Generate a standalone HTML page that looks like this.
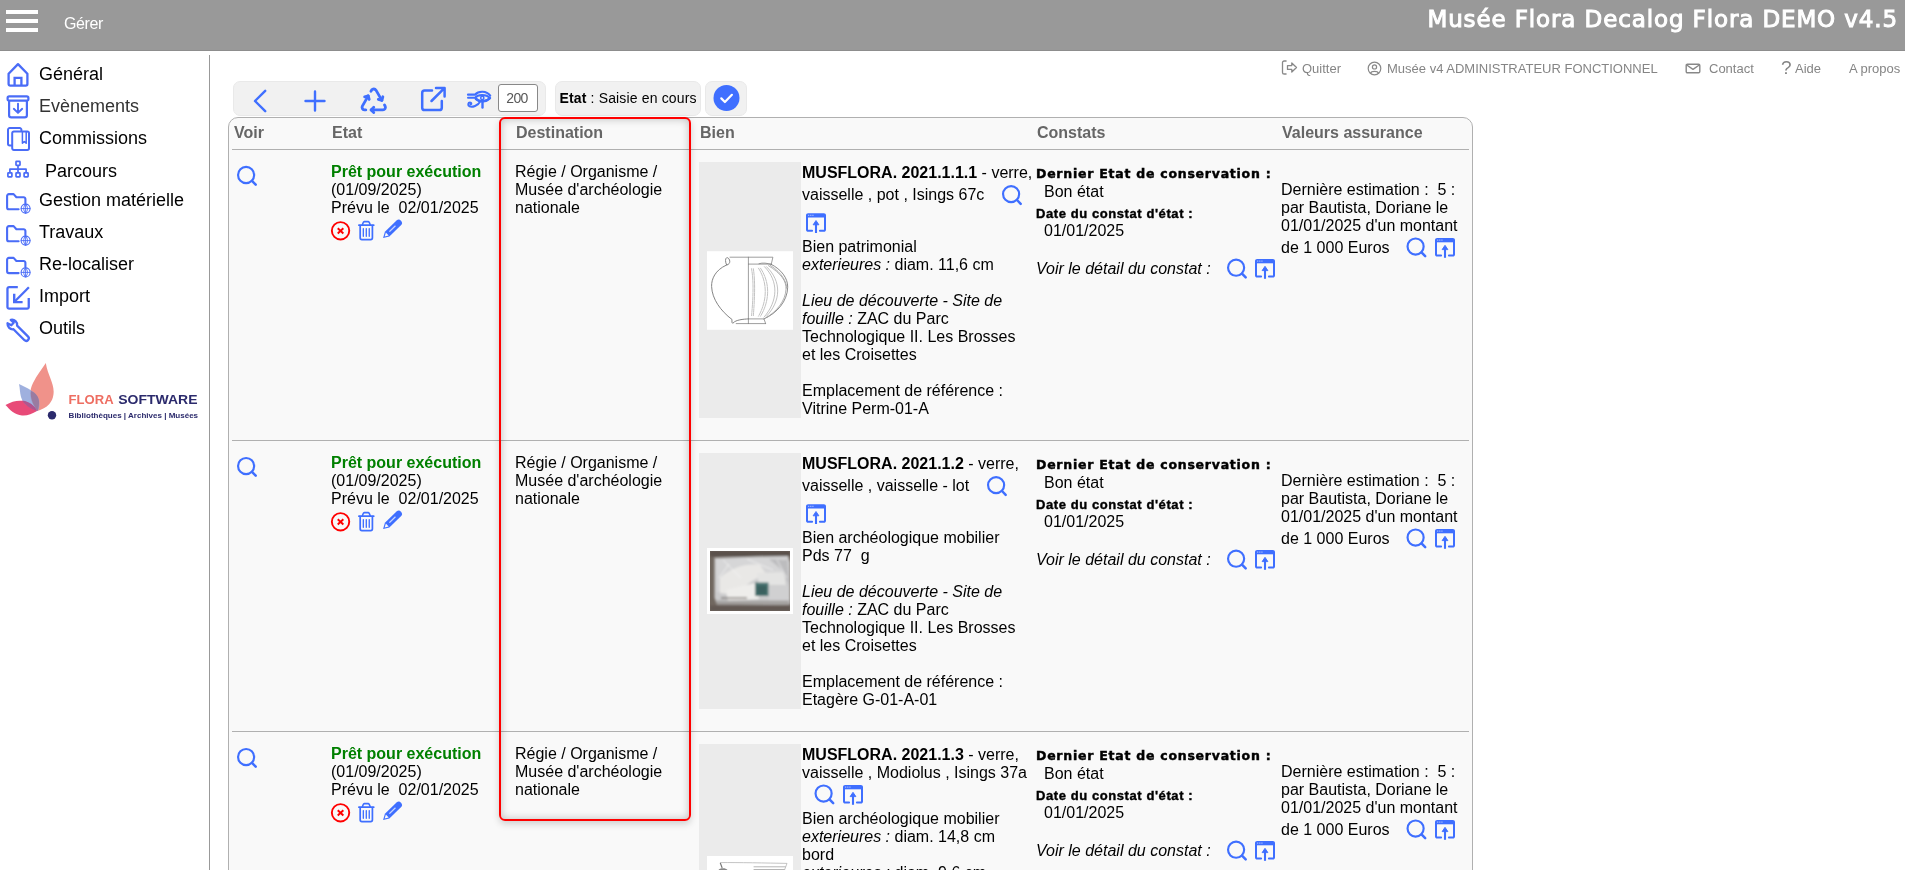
<!DOCTYPE html>
<html lang="fr">
<head>
<meta charset="utf-8">
<title>Musée Flora</title>
<style>
html,body{margin:0;padding:0;}
body{will-change:transform;width:1905px;height:870px;overflow:hidden;background:#fff;font-family:"Liberation Sans",Arial,sans-serif;font-size:16px;color:#000;position:relative;}
.abs{position:absolute;}
#hdr{position:absolute;left:0;top:0;width:1905px;height:50px;background:#999;border-bottom:1px solid #8d8d8d;}
#burger div{position:absolute;left:6px;width:32px;height:4px;background:#fff;}
#gerer{position:absolute;left:64px;top:15px;font-size:16px;color:#fff;letter-spacing:-0.4px;}
#title{position:absolute;right:7px;top:6px;font-family:"DejaVu Sans","Liberation Sans",sans-serif;font-size:23px;letter-spacing:0.880px;-webkit-text-stroke:1px #fff;color:#fff;white-space:nowrap;}
#vline{position:absolute;left:209px;top:55px;width:1px;height:815px;background:#999;}
.nav{position:absolute;left:39px;font-size:18px;white-space:nowrap;line-height:20px;}
.navi{position:absolute;left:5px;width:26px;height:26px;}
.top{position:absolute;top:61px;font-size:13px;color:#858585;white-space:nowrap;line-height:15px;}
.tb{position:absolute;top:81px;height:35px;box-sizing:border-box;background:#f1f1f1;border-radius:7px;border:1px solid #e9e9e9;}
#panel{position:absolute;left:228px;top:117px;width:1243px;height:800px;background:#f9f9f9;border:1px solid #b0b0b0;border-radius:10px;}
.th{position:absolute;top:124px;font-size:16px;font-weight:bold;color:#666;line-height:18px;white-space:nowrap;}
.hl{position:absolute;left:232px;width:1237px;height:1px;background:#b0b0b0;}
.t{position:absolute;margin-top:1px;line-height:18px;white-space:nowrap;font-size:16px;}
.g{color:#008000;font-weight:bold;}
.ic{position:absolute;overflow:visible;}
.row{position:absolute;left:0;width:1905px;height:291px;}
.kb{font-family:"DejaVu Sans","Liberation Sans",sans-serif;font-size:12.5px;font-weight:bold;letter-spacing:0.75px;-webkit-text-stroke:0.450px #000;}
.db{font-size:13px;font-weight:bold;letter-spacing:0.58px;-webkit-text-stroke:0.4px #000;}
#red{position:absolute;left:498.600px;top:117.200px;width:188px;height:700px;border:2px solid #f00;border-radius:6px;box-shadow:0 3px 7px rgba(0,0,0,.17), inset 0 0 9px rgba(0,0,0,.24);}
</style>
</head>
<body>
<div id="hdr">
  <div id="burger"><div style="top:10px"></div><div style="top:19px"></div><div style="top:28px"></div></div>
  <div id="gerer">Gérer</div>
  <div id="title">Musée Flora Decalog Flora DEMO v4.5</div>
</div>
<div id="vline"></div>

<!-- NAV -->
<div class="nav" style="top:64px">Général</div>
<div class="nav" style="top:96px;color:#333">Evènements</div>
<div class="nav" style="top:128px">Commissions</div>
<div class="nav" style="top:161px;left:45px">Parcours</div>
<div class="nav" style="top:190px">Gestion matérielle</div>
<div class="nav" style="top:222px">Travaux</div>
<div class="nav" style="top:254px">Re-localiser</div>
<div class="nav" style="top:286px">Import</div>
<div class="nav" style="top:318px">Outils</div>


<!-- NAV ICONS -->
<svg class="ic" style="left:7px;top:62px" width="22" height="25" viewBox="0.000 -0.500 22 25" fill="none" stroke="#4a6cf7" stroke-width="2.3" stroke-linejoin="round" stroke-linecap="round"><path d="M1.6 11.2L11 1.6L20.4 11.2V21.6a1.6 1.6 0 0 1-1.6 1.6H3.2a1.6 1.6 0 0 1-1.6-1.6Z"/><path d="M7.6 23V15.4H14.4V23" stroke-linejoin="miter" stroke-linecap="butt"/></svg>
<svg class="ic" style="left:6px;top:95px" width="23" height="24" viewBox="-0.500 0.000 23 24" fill="none" stroke="#4a6cf7" stroke-width="2.2" stroke-linejoin="round" stroke-linecap="round"><rect x="1.1" y="1.3" width="20.8" height="4.4" rx="1.6"/><path d="M2.6 6V20.2a2.2 2.2 0 0 0 2.2 2.2H18.2a2.2 2.2 0 0 0 2.2-2.2V6"/><path d="M11.5 8.6V17.6M7.3 13.8L11.5 17.9L15.7 13.8" stroke-width="1.9"/></svg>
<svg class="ic" style="left:7px;top:127px" width="23" height="24" viewBox="0.000 0.000 23 24" fill="none" stroke="#4a6cf7" stroke-width="2" stroke-linejoin="round" stroke-linecap="round"><path d="M14.4 3.4V2.8A1.7 1.7 0 0 0 12.7 1.1H2.7A1.7 1.7 0 0 0 1 2.8V16.8a1.7 1.7 0 0 0 1.7 1.7H4.6"/><path d="M5.2 6.2a1.7 1.7 0 0 1 1.7-1.7H20.3A1.7 1.7 0 0 1 22 6.2V21.3a1.7 1.7 0 0 1-1.7 1.7H6.9a1.7 1.7 0 0 1-1.7-1.7Z"/><path d="M15.4 5V16.2L17.3 14.6L19.2 16.2V5" stroke-width="1.5"/></svg>
<svg class="ic" style="left:7px;top:160px" width="22" height="18" viewBox="0.000 -0.500 22 18" fill="none" stroke="#4a6cf7" stroke-width="1.7" stroke-linejoin="round"><rect x="9" y="0.9" width="4" height="4" rx="0.6"/><rect x="0.9" y="12.4" width="4" height="4" rx="0.6"/><rect x="9" y="12.4" width="4" height="4" rx="0.6"/><rect x="17.1" y="12.4" width="4" height="4" rx="0.6"/><path d="M11 5V12.4M2.9 12.4V8.7H19.1V12.4"/></svg>
<svg class="ic" style="left:6px;top:193px" width="25" height="21" viewBox="0.000 0.000 25 21" fill="none" stroke="#4a6cf7" stroke-linejoin="round" stroke-linecap="round"><path d="M12.6 16.3H2.9A1.8 1.8 0 0 1 1.1 14.5V2.9A1.8 1.8 0 0 1 2.9 1.1H7.6L10.4 4.2H17.6A1.8 1.8 0 0 1 19.4 6V10.2" stroke-width="2.1"/><circle cx="19.6" cy="15.6" r="4.5" stroke-width="1.1"/><path d="M15.2 15.6H24M19.6 11.1V20.1M19.6 11.1C17 13.5 17 17.7 19.6 20.1M19.6 11.1C22.2 13.5 22.2 17.7 19.6 20.1" stroke-width="0.9"/></svg>
<svg class="ic" style="left:6px;top:225px" width="25" height="21" viewBox="0.000 0.000 25 21" fill="none" stroke="#4a6cf7" stroke-linejoin="round" stroke-linecap="round"><path d="M12.6 16.3H2.9A1.8 1.8 0 0 1 1.1 14.5V2.9A1.8 1.8 0 0 1 2.9 1.1H7.6L10.4 4.2H17.6A1.8 1.8 0 0 1 19.4 6V10.2" stroke-width="2.1"/><circle cx="19.6" cy="15.6" r="4.5" stroke-width="1.1"/><path d="M15.2 15.6H24M19.6 11.1V20.1M19.6 11.1C17 13.5 17 17.7 19.6 20.1M19.6 11.1C22.2 13.5 22.2 17.7 19.6 20.1" stroke-width="0.9"/></svg>
<svg class="ic" style="left:6px;top:256px" width="25" height="21" viewBox="0.000 -0.800 25 21" fill="none" stroke="#4a6cf7" stroke-linejoin="round" stroke-linecap="round"><path d="M12.6 16.3H2.9A1.8 1.8 0 0 1 1.1 14.5V2.9A1.8 1.8 0 0 1 2.9 1.1H7.6L10.4 4.2H17.6A1.8 1.8 0 0 1 19.4 6V10.2" stroke-width="2.1"/><circle cx="19.6" cy="15.6" r="4.5" stroke-width="1.1"/><path d="M15.2 15.6H24M19.6 11.1V20.1M19.6 11.1C17 13.5 17 17.7 19.6 20.1M19.6 11.1C22.2 13.5 22.2 17.7 19.6 20.1" stroke-width="0.9"/></svg>
<svg class="ic" style="left:6px;top:286px" width="24" height="24" viewBox="-0.300 0.000 24 24" fill="none" stroke="#4a6cf7" stroke-width="2.300"><path d="M11.500 1.150H2.800A1.650 1.650 0 0 0 1.150 2.800V21A1.650 1.650 0 0 0 2.800 22.650H20.800A1.650 1.650 0 0 0 22.450 21V12"/><path d="M22.600 1.300L8.400 15.500"/><path d="M7.900 7.700V16.100H16.300" stroke-width="2.400"/></svg>
<svg class="ic" style="left:6px;top:318px" width="24" height="24" viewBox="-0.300 -0.800 24 24" fill="none" stroke="#4a6cf7" stroke-width="2.300" stroke-linejoin="round" stroke-linecap="round"><path d="M4.500 1.100L7.400 3.900L5 6.400L1.200 4.400C1 8.200 4 11 7.200 10.400L18.200 21.400A2.550 2.550 0 0 0 21.800 17.800L10.800 6.800C11.300 3.400 8.200 0.200 4.500 1.100Z"/></svg>
<!-- LOGO -->
<svg class="ic" style="left:0;top:355px" width="210" height="75" viewBox="0 0 210 75">
<path d="M45.8 8C48 22 56 30 53 42C51 50 44 54 37.5 56C30 48 28 38 33 28C37 20 42 14 45.8 8Z" fill="#f0928a"/>
<path d="M5.5 50C12 46 18 45 24 46C30 47 35 51 37 56C32 59 27 61 22 60.5C15 60 10 55 5.5 50Z" fill="#e84a78"/>
<path d="M19 29C27 33 36 36 39 45C40 50 39 54 37.5 56C30 53 23 49 21 42C19.800 38 20 33 19 29Z" fill="#8ea2d8" fill-opacity="0.85"/>
<path d="M31 36C36 38 39 42 39 47C39 51 38.500 54 37.5 56C33 50 30 43 31 36Z" fill="#9a7ba0"/>
<path d="M22 45.500C28 46 34 50 37.5 56C32 54.500 26 51 22 45.500Z" fill="#b0558e"/>
<circle cx="52" cy="60.300" r="4.200" fill="#2b2a6c"/>
<text x="68.600" y="49.400" font-family="Liberation Sans, Arial, sans-serif" font-weight="bold" font-size="13.400" fill="#ee6e62" textLength="45" lengthAdjust="spacingAndGlyphs">FLORA</text>
<text x="118.300" y="49.400" font-family="Liberation Sans, Arial, sans-serif" font-weight="bold" font-size="13.400" fill="#2b2a6c" textLength="79.200" lengthAdjust="spacingAndGlyphs">SOFTWARE</text>
<text x="68.600" y="62.800" font-family="Liberation Sans, Arial, sans-serif" font-weight="bold" font-size="7.400" fill="#2b2a6c" textLength="129.500" lengthAdjust="spacingAndGlyphs">Bibliothèques | Archives | Musées</text>
</svg>

<!-- TOP ICONS -->
<svg class="ic" style="left:1281px;top:60px" width="16" height="15" viewBox="-0.500 0.000 16 15" fill="none" stroke="#888" stroke-width="1.3" stroke-linejoin="round" stroke-linecap="round"><path d="M4.6 1H2.6A1.6 1.6 0 0 0 1 2.600V12.400A1.600 1.600 0 0 0 2.600 14H4.600"/><path d="M6 5.600H10.300V3L15 7.500L10.300 12V9.400H6Z"/></svg>
<svg class="ic" style="left:1367px;top:61px" width="14" height="14" viewBox="-0.500 -0.500 14 14" fill="none" stroke="#888" stroke-width="1.200"><circle cx="7" cy="7" r="6.300"/><circle cx="7" cy="5.400" r="2.100"/><path d="M3 11.700C4 9.300 10 9.300 11 11.700"/></svg>
<svg class="ic" style="left:1685px;top:63px" width="15" height="10" viewBox="-0.500 -0.500 15 10" fill="none" stroke="#888" stroke-width="1.400" stroke-linejoin="round"><rect x="0.700" y="0.700" width="13.600" height="8.600" rx="1.200"/><path d="M1.200 1.500L7.500 5.800L13.800 1.500"/></svg>
<div class="top" style="left:1781px;top:58px;font-size:19px;line-height:20px">?</div>
<!-- TOP LINKS -->
<div class="top" style="left:1302px">Quitter</div>
<div class="top" style="left:1387px">Musée v4 ADMINISTRATEUR FONCTIONNEL</div>
<div class="top" style="left:1709px">Contact</div>
<div class="top" style="left:1795px">Aide</div>
<div class="top" style="left:1849px">A propos</div>

<!-- TOOLBAR -->
<div class="tb" style="left:233px;width:313px"></div>
<div class="tb" style="left:555px;width:146px"></div>
<div class="tb" style="left:705px;width:42px"></div>


<!-- TOOLBAR ICONS -->
<svg class="ic" style="left:253px;top:89px" width="14" height="24" viewBox="0.000 0.000 14 24" fill="none" stroke="#3f6fff" stroke-width="2.400" stroke-linecap="round" stroke-linejoin="round"><path d="M12.200 1.800L2 12L12.200 22.200"/></svg>
<svg class="ic" style="left:304px;top:90px" width="22" height="22" viewBox="0.000 0.000 22 22" fill="none" stroke="#3f6fff" stroke-width="2.400" stroke-linecap="round"><path d="M11 1.500V20.500M1.500 11H20.500"/></svg>
<svg class="ic" style="left:358px;top:85px" width="31.500" height="31.500" viewBox="0.000 0.000 24 24" fill="none" stroke="#3f6fff" stroke-width="2.150" stroke-linecap="round" stroke-linejoin="round"><path d="M12 17l-2 2l2 2"/><path d="M10 19h9a2 2 0 0 0 1.750 -2.750l-.550 -1"/><path d="M8.536 11l-.732 -2.732l-2.732 .732"/><path d="M7.804 8.268l-4.500 7.794a2 2 0 0 0 1.506 2.890l1.141 .024"/><path d="M15.464 11l2.732 .732l.732 -2.732"/><path d="M18.196 11.732l-4.500 -7.794a2 2 0 0 0 -3.256 -.140l-.591 .976"/></svg>
<svg class="ic" style="left:421px;top:86px" width="25" height="25" viewBox="0.000 -0.500 25 25" fill="none" stroke="#3f6fff" stroke-width="2.500" stroke-linecap="round" stroke-linejoin="round"><path d="M11 4H3.600A2.400 2.400 0 0 0 1.200 6.400V21.200A2.400 2.400 0 0 0 3.600 23.600H18.400A2.400 2.400 0 0 0 20.800 21.200V14.500"/><path d="M10.500 14.500L23.400 1.600M15 1.400H23.600V10"/></svg>
<svg class="ic" style="left:467px;top:90px" width="24" height="18" viewBox="0.000 -0.500 24 18" fill="none" stroke="#3f6fff" stroke-width="2" stroke-linecap="round" stroke-linejoin="round"><path d="M1 4.200H8C11.500 0.200 19.500 0 23.200 5.200" stroke-width="2.200"/><path d="M1 7.300H8C11 3.400 19 3.400 23.200 7.500C19 11.800 12 11.800 8.500 7.800"/><path d="M9 8.500C13 12 19 11.500 22.500 8" stroke-width="2.400"/><circle cx="15.300" cy="7.400" r="1.600" stroke-width="1.500"/><path d="M15.500 10.800V17" stroke-width="2.400"/><path d="M13.500 10.600C11 15.500 5 17 2.600 15.900C0.500 14.800 1 12 3 12C4.500 12 4.800 13.600 3.600 14"/></svg>
<div class="abs" style="left:498px;top:84px;width:36px;padding-right:2px;height:26px;border:1px solid #888;border-radius:3px;background:#fff;font-size:14px;color:#585858;line-height:26px;text-align:center;letter-spacing:-0.700px">200</div>
<div class="abs" style="left:559.500px;top:90px;font-size:14px;line-height:16px;white-space:nowrap;letter-spacing:0.150px"><b>Etat</b> : Saisie en cours</div>
<svg class="ic" style="left:713px;top:85px" width="26" height="26" viewBox="-0.500 0.000 26 26"><circle cx="13" cy="13" r="13" fill="#3f6fff"/><path d="M7.800 13.400L11.400 17L18.400 9.800" fill="none" stroke="#fff" stroke-width="2.200" stroke-linecap="round" stroke-linejoin="round"/></svg>
<div id="panel"></div>
<div class="th" style="left:234px">Voir</div>
<div class="th" style="left:332px">Etat</div>
<div class="th" style="left:516px">Destination</div>
<div class="th" style="left:700px">Bien</div>
<div class="th" style="left:1037px">Constats</div>
<div class="th" style="left:1282px">Valeurs assurance</div>
<div class="hl" style="top:149px"></div>
<div class="hl" style="top:440px"></div>
<div class="hl" style="top:731px"></div>

<!--ROWS-->
<div class="row" style="top:150px">
<svg class="ic" style="left:236px;top:16px" width="22" height="22" viewBox="-0.800 0.000 22 22" fill="none" stroke="#3f6fff"><circle cx="9.3" cy="9" r="8.050" stroke-width="2.150"/><path d="M15.200 14.900L18.900 18.700" stroke-width="2.500" stroke-linecap="round"/></svg>
<div class="t g" style="left:331px;top:12px">Prêt pour exécution</div>
<div class="t" style="left:331px;top:30px">(01/09/2025)</div>
<div class="t" style="left:331px;top:48px">Prévu le&nbsp; 02/01/2025</div>
<svg class="ic" style="left:330px;top:70px" width="20" height="20" viewBox="-0.550 -0.800 20 20" fill="none" stroke="#f00"><circle cx="10" cy="10" r="8.700" stroke-width="1.900"/><path d="M7.200 7.400L12.800 12.700M12.800 7.400L7.200 12.700" stroke-width="1.900"/></svg>
<svg class="ic" style="left:357px;top:70px" width="17.200" height="20" viewBox="-0.733 -0.600 18 20" preserveAspectRatio="none" fill="none" stroke="#3f6fff" stroke-linecap="round"><path d="M1.200 4.600H16.800" stroke-width="1.700"/><path d="M4.900 4.200C5.600 1.600 6.200 1 7 1h4c.8 0 1.400.6 2.100 3.200" stroke-width="1.600"/><path d="M2.600 5V17.200a1.800 1.800 0 0 0 1.800 1.800h9.200a1.800 1.800 0 0 0 1.800-1.800V5" stroke-width="1.800"/><path d="M5.900 8V15.600M9 8V15.600M12.100 8V15.600" stroke-width="1.400"/></svg>
<svg class="ic" style="left:382px;top:68px" width="22" height="22" viewBox="0.000 0.000 22 22"><g transform="translate(1.100,20) rotate(-44)"><path d="M0 0L5.600-3.200H21.700Q24.900-3.200 24.900 0Q24.900 3.200 21.700 3.200H5.600Z" fill="#3f6fff"/><path d="M2.200 0L5.800-2V2Z" fill="#f9f9f9"/><path d="M9.500-.2H17" stroke="#c9d5ff" stroke-width="1.200" stroke-linecap="round"/></g></svg>
<div class="t" style="left:515px;top:12px">Régie / Organisme /<br>Musée d'archéologie<br>nationale</div>
<div class="abs" style="left:699px;top:12px;width:102px;height:256px;background:#ebebeb"></div>
<svg class="ic" style="left:707px;top:101px" width="86" height="78.600" viewBox="0.000 -0.200 86 78.6"><rect width="86" height="78.600" fill="#fff"/>
<g fill="none" stroke="#7d7d7d" stroke-width="0.750" stroke-linecap="round">
<path d="M23 6H65.900L64.300 12.900"/><path d="M41.400 6V72.400"/><path d="M41.400 12.900H64.300M41.400 67.700H57L58.600 72.300M29.200 72.400H58.600"/>
<path d="M19.600 13.800C17.800 10 18.300 6 20.500 6.500C22.800 7.200 24.500 12.800 19.600 13.800C8 19 4.400 28 4.600 35.200C5 48 14 60 25 68.300C24.800 71 25 72.400 26 71.900C29 68.500 36 68 41.400 67.700" stroke-width="0.950"/>
<path d="M64.300 13.200C74 18 81 27 80.700 36C80.400 50 70 62 57 67.700" stroke-width="0.900"/>
<path d="M52 12.500C56 11.200 60 12 64.300 13.200" />
<path d="M61.500 14.500C74 22 79.500 30 79 38C78.500 50 69 61 59 66.500M63 14C76 22 80 32 79.700 37" stroke="#999"/>
<path d="M57.500 15.500C72 30 71 50 57 66M59.500 15.500C75 30 74 50 59.500 65" stroke="#999" stroke-width="0.600"/>
<path d="M51.500 17C61 32 60 50 51.500 65M53.500 17C63.500 32 62.500 50 53.500 65" stroke="#999" stroke-width="0.600" stroke-dasharray="4 1"/>
<path d="M44.500 17.500C47 30 46 50 44.500 65M46.300 17.500C48.500 30 47.500 50 46.300 65" stroke="#999" stroke-width="0.600" stroke-dasharray="3 1"/>
</g></svg>
<div class="t" style="left:802px;top:13px"><b>MUSFLORA. 2021.1.1.1</b> - verre,</div><div class="t" style="left:802px;top:35px">vaisselle , pot , Isings 67c</div><svg class="ic" style="left:1001px;top:35px" width="22" height="22" viewBox="-0.800 -0.100 22 22" fill="none" stroke="#3f6fff"><circle cx="9.3" cy="9" r="8.050" stroke-width="2.150"/><path d="M15.200 14.900L18.900 18.700" stroke-width="2.500" stroke-linecap="round"/></svg><svg class="ic" style="left:806px;top:63px" width="20" height="21" viewBox="0.000 -0.200 20 21" fill="none" stroke="#3f6fff"><path d="M6.100 17.600H2.100a1.100 1.100 0 0 1-1.100-1.100V2.100A1.100 1.100 0 0 1 2.100 1h15.800A1.100 1.100 0 0 1 19 2.100v14.400a1.100 1.100 0 0 1-1.100 1.100h-4" stroke-width="2" stroke-linecap="round"/><rect x="1" y="1" width="18" height="3.300" fill="#3f6fff" stroke="none"/><path d="M2.300 2.100h0.900M4.400 2.100h0.900M6.500 2.100h0.900" stroke="#c5d2ff" stroke-width="1.200"/><path d="M10 19.800V10" stroke-width="2.100"/><path d="M10 7.300L12.900 11.600H7.100Z" fill="#3f6fff" stroke-width="0.900" stroke-linejoin="round"/></svg><div class="t" style="left:802px;top:87px">Bien patrimonial<br><i>exterieures :</i> diam. 11,6 cm<br><br><i>Lieu de découverte - Site de</i><br><i>fouille :</i> ZAC du Parc<br>Technologique II. Les Brosses<br>et les Croisettes<br><br>Emplacement de référence :<br>Vitrine Perm-01-A</div>
<div class="t kb" style="left:1036px;top:14px">Dernier Etat de conservation :</div>
<div class="t" style="left:1044px;top:32px">Bon état</div>
<div class="t db" style="left:1036px;top:54px">Date du constat d'état :</div>
<div class="t" style="left:1044px;top:71px">01/01/2025</div>
<div class="t" style="left:1036px;top:109px;font-style:italic">Voir le détail du constat :</div>
<svg class="ic" style="left:1226px;top:108px" width="22" height="22" viewBox="-0.800 -0.700 22 22" fill="none" stroke="#3f6fff"><circle cx="9.3" cy="9" r="8.050" stroke-width="2.150"/><path d="M15.200 14.900L18.900 18.700" stroke-width="2.500" stroke-linecap="round"/></svg>
<svg class="ic" style="left:1255px;top:109px" width="20" height="21" viewBox="0.000 0.000 20 21" fill="none" stroke="#3f6fff"><path d="M6.100 17.600H2.100a1.100 1.100 0 0 1-1.100-1.100V2.100A1.100 1.100 0 0 1 2.100 1h15.800A1.100 1.100 0 0 1 19 2.100v14.400a1.100 1.100 0 0 1-1.100 1.100h-4" stroke-width="2" stroke-linecap="round"/><rect x="1" y="1" width="18" height="3.300" fill="#3f6fff" stroke="none"/><path d="M2.300 2.100h0.900M4.400 2.100h0.900M6.500 2.100h0.900" stroke="#c5d2ff" stroke-width="1.200"/><path d="M10 19.800V10" stroke-width="2.100"/><path d="M10 7.300L12.900 11.600H7.100Z" fill="#3f6fff" stroke-width="0.900" stroke-linejoin="round"/></svg>
<div class="t" style="left:1281px;top:30px">Dernière estimation :&nbsp; 5 :<br>par Bautista, Doriane le<br>01/01/2025 d'un montant</div>
<div class="t" style="left:1281px;top:88px">de 1 000 Euros</div>
<svg class="ic" style="left:1406px;top:87px" width="22" height="22" viewBox="-0.300 -0.500 22 22" fill="none" stroke="#3f6fff"><circle cx="9.3" cy="9" r="8.050" stroke-width="2.150"/><path d="M15.200 14.900L18.900 18.700" stroke-width="2.500" stroke-linecap="round"/></svg>
<svg class="ic" style="left:1435px;top:88px" width="20" height="21" viewBox="0.000 0.000 20 21" fill="none" stroke="#3f6fff"><path d="M6.100 17.600H2.100a1.100 1.100 0 0 1-1.100-1.100V2.100A1.100 1.100 0 0 1 2.100 1h15.800A1.100 1.100 0 0 1 19 2.100v14.400a1.100 1.100 0 0 1-1.100 1.100h-4" stroke-width="2" stroke-linecap="round"/><rect x="1" y="1" width="18" height="3.300" fill="#3f6fff" stroke="none"/><path d="M2.300 2.100h0.900M4.400 2.100h0.900M6.500 2.100h0.900" stroke="#c5d2ff" stroke-width="1.200"/><path d="M10 19.800V10" stroke-width="2.100"/><path d="M10 7.300L12.900 11.600H7.100Z" fill="#3f6fff" stroke-width="0.900" stroke-linejoin="round"/></svg>
</div>
<div class="row" style="top:441px">
<svg class="ic" style="left:236px;top:16px" width="22" height="22" viewBox="-0.800 0.000 22 22" fill="none" stroke="#3f6fff"><circle cx="9.3" cy="9" r="8.050" stroke-width="2.150"/><path d="M15.200 14.900L18.900 18.700" stroke-width="2.500" stroke-linecap="round"/></svg>
<div class="t g" style="left:331px;top:12px">Prêt pour exécution</div>
<div class="t" style="left:331px;top:30px">(01/09/2025)</div>
<div class="t" style="left:331px;top:48px">Prévu le&nbsp; 02/01/2025</div>
<svg class="ic" style="left:330px;top:70px" width="20" height="20" viewBox="-0.550 -0.800 20 20" fill="none" stroke="#f00"><circle cx="10" cy="10" r="8.700" stroke-width="1.900"/><path d="M7.200 7.400L12.800 12.700M12.800 7.400L7.200 12.700" stroke-width="1.900"/></svg>
<svg class="ic" style="left:357px;top:70px" width="17.200" height="20" viewBox="-0.733 -0.600 18 20" preserveAspectRatio="none" fill="none" stroke="#3f6fff" stroke-linecap="round"><path d="M1.200 4.600H16.800" stroke-width="1.700"/><path d="M4.900 4.200C5.600 1.600 6.200 1 7 1h4c.8 0 1.400.6 2.100 3.200" stroke-width="1.600"/><path d="M2.600 5V17.200a1.800 1.800 0 0 0 1.800 1.800h9.200a1.800 1.800 0 0 0 1.800-1.800V5" stroke-width="1.800"/><path d="M5.900 8V15.600M9 8V15.600M12.100 8V15.600" stroke-width="1.400"/></svg>
<svg class="ic" style="left:382px;top:68px" width="22" height="22" viewBox="0.000 0.000 22 22"><g transform="translate(1.100,20) rotate(-44)"><path d="M0 0L5.600-3.200H21.700Q24.900-3.200 24.900 0Q24.900 3.200 21.700 3.200H5.600Z" fill="#3f6fff"/><path d="M2.200 0L5.800-2V2Z" fill="#f9f9f9"/><path d="M9.500-.2H17" stroke="#c9d5ff" stroke-width="1.200" stroke-linecap="round"/></g></svg>
<div class="t" style="left:515px;top:12px">Régie / Organisme /<br>Musée d'archéologie<br>nationale</div>
<div class="abs" style="left:699px;top:12px;width:102px;height:256px;background:#ebebeb"></div>
<svg class="ic" style="left:707px;top:107px" width="86" height="66" viewBox="0.000 0.000 86 66"><defs><filter id="bl" x="-5%" y="-5%" width="110%" height="110%"><feGaussianBlur stdDeviation="0.800"/></filter><clipPath id="cp"><rect x="3" y="3" width="80" height="60"/></clipPath></defs><rect width="86" height="66" fill="#fff"/>
<g clip-path="url(#cp)"><rect x="3" y="3" width="80" height="60" fill="#70675f"/><g filter="url(#bl)">
<rect x="3" y="3" width="80" height="5.500" fill="#5a514b"/>
<path d="M7.500 10L50 8.500L81 8L83 14L83 56L79 57L10 55.500L7.500 50Z" fill="#cbcbcc"/>
<path d="M9 11L50 9.500L79 10L81 30L60 28L30 40L10 44Z" fill="#d6d6d7"/>
<path d="M13 30C25 19 40 15 53 17L59 26C46 30 36 40 28 47L13 45Z" fill="#e9e8e6"/>
<path d="M19 42L48 35L52 51L21 53Z" fill="#eeedeb"/>
<path d="M50 25L77 24L79 37L52 37Z" fill="#e4e4e3"/>
<path d="M62 11L80 12L82 36L75 22Z" fill="#bcbcbe"/>
<path d="M62 38L81 37L82 54L62 54Z" fill="#d0d0d1"/>
<rect x="48" y="34.500" width="13.500" height="13.500" fill="#4a7472"/><rect x="50" y="37.500" width="9.500" height="9" fill="#3a605f"/>
<path d="M8 52.500H82V57L10 56.500Z" fill="#a5a3a1"/>
<path d="M3 57.500H83V63H3Z" fill="#625952"/><path d="M14 50H40" stroke="#5a534e" stroke-width="1"/>
<path d="M16 12L34 30M40 11L66 22M22 16L12 30M70 12L80 30" stroke="#f8f8f8" stroke-width="0.900" opacity=".75"/>
</g></g></svg>
<div class="t" style="left:802px;top:13px"><b>MUSFLORA. 2021.1.2</b> - verre,</div><div class="t" style="left:802px;top:35px">vaisselle , vaisselle - lot</div><svg class="ic" style="left:986px;top:35px" width="22" height="22" viewBox="-0.800 -0.100 22 22" fill="none" stroke="#3f6fff"><circle cx="9.3" cy="9" r="8.050" stroke-width="2.150"/><path d="M15.200 14.900L18.900 18.700" stroke-width="2.500" stroke-linecap="round"/></svg><svg class="ic" style="left:806px;top:63px" width="20" height="21" viewBox="0.000 -0.200 20 21" fill="none" stroke="#3f6fff"><path d="M6.100 17.600H2.100a1.100 1.100 0 0 1-1.100-1.100V2.100A1.100 1.100 0 0 1 2.100 1h15.800A1.100 1.100 0 0 1 19 2.100v14.400a1.100 1.100 0 0 1-1.100 1.100h-4" stroke-width="2" stroke-linecap="round"/><rect x="1" y="1" width="18" height="3.300" fill="#3f6fff" stroke="none"/><path d="M2.300 2.100h0.900M4.400 2.100h0.900M6.500 2.100h0.900" stroke="#c5d2ff" stroke-width="1.200"/><path d="M10 19.800V10" stroke-width="2.100"/><path d="M10 7.300L12.900 11.600H7.100Z" fill="#3f6fff" stroke-width="0.900" stroke-linejoin="round"/></svg><div class="t" style="left:802px;top:87px">Bien archéologique mobilier<br>Pds 77&nbsp; g<br><br><i>Lieu de découverte - Site de</i><br><i>fouille :</i> ZAC du Parc<br>Technologique II. Les Brosses<br>et les Croisettes<br><br>Emplacement de référence :<br>Etagère G-01-A-01</div>
<div class="t kb" style="left:1036px;top:14px">Dernier Etat de conservation :</div>
<div class="t" style="left:1044px;top:32px">Bon état</div>
<div class="t db" style="left:1036px;top:54px">Date du constat d'état :</div>
<div class="t" style="left:1044px;top:71px">01/01/2025</div>
<div class="t" style="left:1036px;top:109px;font-style:italic">Voir le détail du constat :</div>
<svg class="ic" style="left:1226px;top:108px" width="22" height="22" viewBox="-0.800 -0.700 22 22" fill="none" stroke="#3f6fff"><circle cx="9.3" cy="9" r="8.050" stroke-width="2.150"/><path d="M15.200 14.900L18.900 18.700" stroke-width="2.500" stroke-linecap="round"/></svg>
<svg class="ic" style="left:1255px;top:109px" width="20" height="21" viewBox="0.000 0.000 20 21" fill="none" stroke="#3f6fff"><path d="M6.100 17.600H2.100a1.100 1.100 0 0 1-1.100-1.100V2.100A1.100 1.100 0 0 1 2.100 1h15.800A1.100 1.100 0 0 1 19 2.100v14.400a1.100 1.100 0 0 1-1.100 1.100h-4" stroke-width="2" stroke-linecap="round"/><rect x="1" y="1" width="18" height="3.300" fill="#3f6fff" stroke="none"/><path d="M2.300 2.100h0.900M4.400 2.100h0.900M6.500 2.100h0.900" stroke="#c5d2ff" stroke-width="1.200"/><path d="M10 19.800V10" stroke-width="2.100"/><path d="M10 7.300L12.900 11.600H7.100Z" fill="#3f6fff" stroke-width="0.900" stroke-linejoin="round"/></svg>
<div class="t" style="left:1281px;top:30px">Dernière estimation :&nbsp; 5 :<br>par Bautista, Doriane le<br>01/01/2025 d'un montant</div>
<div class="t" style="left:1281px;top:88px">de 1 000 Euros</div>
<svg class="ic" style="left:1406px;top:87px" width="22" height="22" viewBox="-0.300 -0.500 22 22" fill="none" stroke="#3f6fff"><circle cx="9.3" cy="9" r="8.050" stroke-width="2.150"/><path d="M15.200 14.900L18.900 18.700" stroke-width="2.500" stroke-linecap="round"/></svg>
<svg class="ic" style="left:1435px;top:88px" width="20" height="21" viewBox="0.000 0.000 20 21" fill="none" stroke="#3f6fff"><path d="M6.100 17.600H2.100a1.100 1.100 0 0 1-1.100-1.100V2.100A1.100 1.100 0 0 1 2.100 1h15.800A1.100 1.100 0 0 1 19 2.100v14.400a1.100 1.100 0 0 1-1.100 1.100h-4" stroke-width="2" stroke-linecap="round"/><rect x="1" y="1" width="18" height="3.300" fill="#3f6fff" stroke="none"/><path d="M2.300 2.100h0.900M4.400 2.100h0.900M6.500 2.100h0.900" stroke="#c5d2ff" stroke-width="1.200"/><path d="M10 19.800V10" stroke-width="2.100"/><path d="M10 7.300L12.900 11.600H7.100Z" fill="#3f6fff" stroke-width="0.900" stroke-linejoin="round"/></svg>
</div>
<div class="row" style="top:732px">
<svg class="ic" style="left:236px;top:16px" width="22" height="22" viewBox="-0.800 0.000 22 22" fill="none" stroke="#3f6fff"><circle cx="9.3" cy="9" r="8.050" stroke-width="2.150"/><path d="M15.200 14.900L18.900 18.700" stroke-width="2.500" stroke-linecap="round"/></svg>
<div class="t g" style="left:331px;top:12px">Prêt pour exécution</div>
<div class="t" style="left:331px;top:30px">(01/09/2025)</div>
<div class="t" style="left:331px;top:48px">Prévu le&nbsp; 02/01/2025</div>
<svg class="ic" style="left:330px;top:70px" width="20" height="20" viewBox="-0.550 -0.800 20 20" fill="none" stroke="#f00"><circle cx="10" cy="10" r="8.700" stroke-width="1.900"/><path d="M7.200 7.400L12.800 12.700M12.800 7.400L7.200 12.700" stroke-width="1.900"/></svg>
<svg class="ic" style="left:357px;top:70px" width="17.200" height="20" viewBox="-0.733 -0.600 18 20" preserveAspectRatio="none" fill="none" stroke="#3f6fff" stroke-linecap="round"><path d="M1.200 4.600H16.800" stroke-width="1.700"/><path d="M4.900 4.200C5.600 1.600 6.200 1 7 1h4c.8 0 1.400.6 2.100 3.200" stroke-width="1.600"/><path d="M2.600 5V17.200a1.800 1.800 0 0 0 1.800 1.800h9.200a1.800 1.800 0 0 0 1.800-1.800V5" stroke-width="1.800"/><path d="M5.900 8V15.600M9 8V15.600M12.100 8V15.600" stroke-width="1.400"/></svg>
<svg class="ic" style="left:382px;top:68px" width="22" height="22" viewBox="0.000 0.000 22 22"><g transform="translate(1.100,20) rotate(-44)"><path d="M0 0L5.600-3.200H21.700Q24.900-3.200 24.900 0Q24.900 3.200 21.700 3.200H5.600Z" fill="#3f6fff"/><path d="M2.200 0L5.800-2V2Z" fill="#f9f9f9"/><path d="M9.500-.2H17" stroke="#c9d5ff" stroke-width="1.200" stroke-linecap="round"/></g></svg>
<div class="t" style="left:515px;top:12px">Régie / Organisme /<br>Musée d'archéologie<br>nationale</div>
<div class="abs" style="left:699px;top:12px;width:102px;height:256px;background:#ebebeb"></div>
<svg class="ic" style="left:707px;top:124px" width="86" height="20" viewBox="0.000 0.000 86 20"><rect width="86" height="20" fill="#fff"/>
<g fill="none" stroke="#b5b5b5" stroke-width="0.800"><path d="M13.500 6.600C30 6.400 60 7 80 7.400L77.500 14"/><path d="M46.600 10.800H78.800M46.600 13.500H77.800" stroke-width="1"/><path d="M13.200 6.800L15.200 12" stroke="#777" stroke-width="1.100"/><path d="M11.500 14C12.500 11.800 19 11.600 20.500 14Z" fill="#888" stroke="none"/></g></svg>
<div class="t" style="left:802px;top:13px"><b>MUSFLORA. 2021.1.3</b> - verre,</div><div class="t" style="left:802px;top:31px">vaisselle , Modiolus , Isings 37a</div><svg class="ic" style="left:814px;top:52px" width="22" height="22" viewBox="-0.300 -0.500 22 22" fill="none" stroke="#3f6fff"><circle cx="9.3" cy="9" r="8.050" stroke-width="2.150"/><path d="M15.200 14.900L18.900 18.700" stroke-width="2.500" stroke-linecap="round"/></svg><svg class="ic" style="left:843px;top:53px" width="20" height="21" viewBox="0.000 0.000 20 21" fill="none" stroke="#3f6fff"><path d="M6.100 17.600H2.100a1.100 1.100 0 0 1-1.100-1.100V2.100A1.100 1.100 0 0 1 2.100 1h15.800A1.100 1.100 0 0 1 19 2.100v14.400a1.100 1.100 0 0 1-1.100 1.100h-4" stroke-width="2" stroke-linecap="round"/><rect x="1" y="1" width="18" height="3.300" fill="#3f6fff" stroke="none"/><path d="M2.300 2.100h0.900M4.400 2.100h0.900M6.500 2.100h0.900" stroke="#c5d2ff" stroke-width="1.200"/><path d="M10 19.800V10" stroke-width="2.100"/><path d="M10 7.300L12.900 11.600H7.100Z" fill="#3f6fff" stroke-width="0.900" stroke-linejoin="round"/></svg><div class="t" style="left:802px;top:77px">Bien archéologique mobilier<br><i>exterieures :</i> diam. 14,8 cm<br>bord<br><i>exterieures :</i> diam. 9,6 cm</div>
<div class="t kb" style="left:1036px;top:14px">Dernier Etat de conservation :</div>
<div class="t" style="left:1044px;top:32px">Bon état</div>
<div class="t db" style="left:1036px;top:54px">Date du constat d'état :</div>
<div class="t" style="left:1044px;top:71px">01/01/2025</div>
<div class="t" style="left:1036px;top:109px;font-style:italic">Voir le détail du constat :</div>
<svg class="ic" style="left:1226px;top:108px" width="22" height="22" viewBox="-0.800 -0.700 22 22" fill="none" stroke="#3f6fff"><circle cx="9.3" cy="9" r="8.050" stroke-width="2.150"/><path d="M15.200 14.900L18.900 18.700" stroke-width="2.500" stroke-linecap="round"/></svg>
<svg class="ic" style="left:1255px;top:109px" width="20" height="21" viewBox="0.000 0.000 20 21" fill="none" stroke="#3f6fff"><path d="M6.100 17.600H2.100a1.100 1.100 0 0 1-1.100-1.100V2.100A1.100 1.100 0 0 1 2.100 1h15.800A1.100 1.100 0 0 1 19 2.100v14.400a1.100 1.100 0 0 1-1.100 1.100h-4" stroke-width="2" stroke-linecap="round"/><rect x="1" y="1" width="18" height="3.300" fill="#3f6fff" stroke="none"/><path d="M2.300 2.100h0.900M4.400 2.100h0.900M6.500 2.100h0.900" stroke="#c5d2ff" stroke-width="1.200"/><path d="M10 19.800V10" stroke-width="2.100"/><path d="M10 7.300L12.900 11.600H7.100Z" fill="#3f6fff" stroke-width="0.900" stroke-linejoin="round"/></svg>
<div class="t" style="left:1281px;top:30px">Dernière estimation :&nbsp; 5 :<br>par Bautista, Doriane le<br>01/01/2025 d'un montant</div>
<div class="t" style="left:1281px;top:88px">de 1 000 Euros</div>
<svg class="ic" style="left:1406px;top:87px" width="22" height="22" viewBox="-0.300 -0.500 22 22" fill="none" stroke="#3f6fff"><circle cx="9.3" cy="9" r="8.050" stroke-width="2.150"/><path d="M15.200 14.900L18.900 18.700" stroke-width="2.500" stroke-linecap="round"/></svg>
<svg class="ic" style="left:1435px;top:88px" width="20" height="21" viewBox="0.000 0.000 20 21" fill="none" stroke="#3f6fff"><path d="M6.100 17.600H2.100a1.100 1.100 0 0 1-1.100-1.100V2.100A1.100 1.100 0 0 1 2.100 1h15.800A1.100 1.100 0 0 1 19 2.100v14.400a1.100 1.100 0 0 1-1.100 1.100h-4" stroke-width="2" stroke-linecap="round"/><rect x="1" y="1" width="18" height="3.300" fill="#3f6fff" stroke="none"/><path d="M2.300 2.100h0.900M4.400 2.100h0.900M6.500 2.100h0.900" stroke="#c5d2ff" stroke-width="1.200"/><path d="M10 19.800V10" stroke-width="2.100"/><path d="M10 7.300L12.900 11.600H7.100Z" fill="#3f6fff" stroke-width="0.900" stroke-linejoin="round"/></svg>
</div>
<!--/ROWS-->

<div id="red"></div>
</body>
</html>
